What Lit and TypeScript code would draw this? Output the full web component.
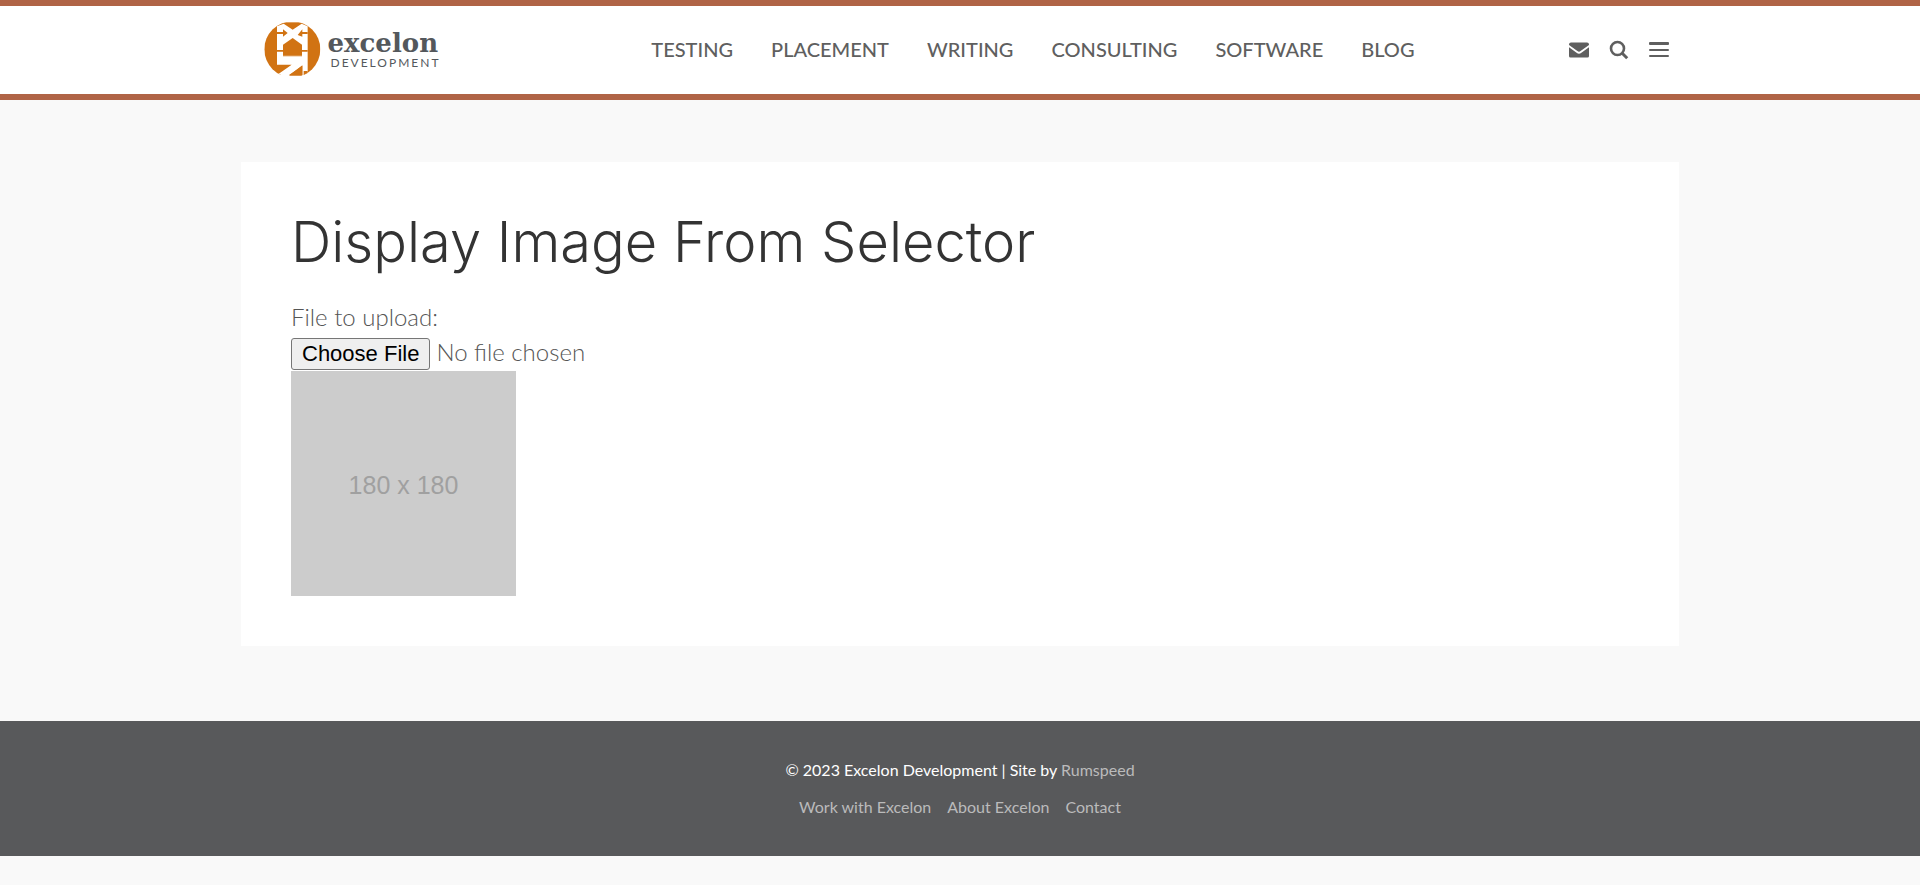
import { LitElement, html, css } from "lit";
import { customElement } from "lit/decorators.js";

const NAV = ["Testing", "Placement", "Writing", "Consulting", "Software", "Blog"];
const FOOTER_LINKS = ["Work with Excelon", "About Excelon", "Contact"];

@customElement("site-header")
class SiteHeader extends LitElement {
  static styles = css`
    :host {
      display: block;
      background: #fff;
      border-top: 6px solid #b06446;
      border-bottom: 6px solid #b06446;
      font-family: Lato, "Open Sans", sans-serif;
    }
    .bar {
      box-sizing: border-box;
      max-width: 1437px;
      height: 88px;
      margin: 0 auto;
      padding: 0 10px 2px 22px;
      display: grid;
      grid-template-columns: 1fr auto auto;
      column-gap: 154px;
      align-items: center;
    }
    .logo {
      display: flex;
      align-items: center;
      gap: 7px;
      color: #54585c;
      text-decoration: none;
    }
    .mark { width: 57px; height: 54px; }
    .words { display: flex; flex-direction: column; }
    .name {
      font: bold 26px/28px "DejaVu Serif", serif;
    }
    .sub {
      font-size: 12px;
      line-height: 12px;
      letter-spacing: 2px;
      padding-left: 3px;
    }
    nav { display: flex; gap: 38px; }
    nav a {
      color: #5f5f5f;
      font-size: 20px;
      font-weight: 500;
      line-height: 30px;
      text-decoration: none;
      text-transform: uppercase;
    }
    .tools {
      display: flex;
      justify-content: flex-end;
      align-items: center;
      gap: 20px;
      padding-top: 2px;
    }
    .tools button {
      display: block;
      width: 20px;
      height: 20px;
      padding: 0;
      border: 0;
      background: none;
      color: #5f5f5f;
      cursor: pointer;
    }
    .tools svg { display: block; width: 20px; height: 20px; }
  `;

  render() {
    return html`
      <div class="bar">
        <a class="logo" href="#" aria-label="Excelon Development">
          <svg class="mark" viewBox="101 65 171 162" aria-hidden="true">
            <clipPath id="disc"><path d="M102 147a84 84 0 1 0 168 0a84 84 0 1 0-168 0"/></clipPath>
            <g clip-path="url(#disc)">
              <rect x="100" y="66" width="172" height="158" fill="#d17313"/>
              <path fill="#fff" d="M140 78L160 70L187 88L214 70L232 78V224H216V196L176 224H140L184 193H140V78Z"/>
              <g fill="#d17313">
                <path d="M158 165V133L187 113L215 133V165Z"/>
                <path d="M140 95H158V87L172 98L158 109V101H140ZM232 101H216V109L202 104L216 87V95H232Z"/>
                <path d="M140 149H158V154H140ZM215 149H232V154H215Z"/>
                <path d="M216 195V226H176ZM220 212H232V226H220Z"/>
                <path d="M158 165H215V168H158Z"/>
              </g>
            </g>
          </svg>
          <span class="words">
            <span class="name">excelon</span>
            <span class="sub">DEVELOPMENT</span>
          </span>
        </a>
        <nav aria-label="Main">${NAV.map((n) => html`<a href="#">${n}</a>`)}</nav>
        <div class="tools">
          <button aria-label="Email">
            <svg viewBox="0 0 20 20" fill="currentColor">
              <path d="M2 2.500H18a2 2 0 0 1 2 2v.5L11.600 11.100a2.700 2.700 0 0 1-3.200 0L0 5V4.500a2 2 0 0 1 2-2zM0 7.200L7.600 12.800a4 4 0 0 0 4.800 0L20 7.200V16a1.500 1.500 0 0 1-1.500 1.500H1.500A1.500 1.500 0 0 1 0 16z"/>
            </svg>
          </button>
          <button aria-label="Search">
            <svg viewBox="0 0 20 20" fill="none" stroke="currentColor">
              <circle cx="8.500" cy="8.500" r="6.500" stroke-width="2.600"/>
              <path d="M13.200 13.200L18.200 18.200" stroke-width="3"/>
            </svg>
          </button>
          <button aria-label="Menu">
            <svg viewBox="0 0 20 20" fill="currentColor">
              <rect y="2" width="20" height="3" rx="1"/>
              <rect y="9" width="20" height="2" rx="1"/>
              <rect y="15" width="20" height="2" rx="1"/>
            </svg>
          </button>
        </div>
      </div>
    `;
  }
}

@customElement("site-footer")
class SiteFooter extends LitElement {
  static styles = css`
    :host {
      display: block;
      padding: 30px 24px 31px;
      background: #58595b;
      color: #fff;
      text-align: center;
      font: 16px/37px Lato, sans-serif;
    }
    p { margin: 0; }
    a { color: #bbb; text-decoration: none; }
    .links { display: flex; justify-content: center; gap: 16px; }
  `;

  render() {
    return html`
      <p>© 2023 Excelon Development | Site by <a href="#">Rumspeed</a></p>
      <div class="links">${FOOTER_LINKS.map((l) => html`<a href="#">${l}</a>`)}</div>
    `;
  }
}

@customElement("app-root")
class AppRoot extends LitElement {
  static styles = css`
    :host {
      display: block;
      min-height: 100vh;
      background: #f9f9f9;
      font-family: Lato, sans-serif;
    }
    main { padding: 62px 24px 75px; }
    .card {
      box-sizing: border-box;
      max-width: 1438px;
      margin: 0 auto;
      padding: 50px;
      background: #fff;
    }
    h1 {
      margin: 0 0 27px;
      color: #333;
      font: 300 56px/60px Inter, sans-serif;
    }
    .upload {
      display: flex;
      flex-direction: column;
      color: #555;
      font-size: 24px;
      font-weight: 300;
      line-height: 36px;
    }
    input {
      height: 36px;
      font: inherit;
      line-height: 34px;
      color: inherit;
    }
    input::file-selector-button {
      box-sizing: border-box;
      height: 32px;
      margin-right: 6px;
      padding: 0 10px;
      border: 1px solid #767676;
      border-radius: 3px;
      background: #efefef;
      color: #000;
      font: 22px/28px "Liberation Sans", Arial, sans-serif;
    }
    .preview {
      box-sizing: border-box;
      display: flex;
      align-items: center;
      justify-content: center;
      width: 225px;
      height: 225px;
      padding-top: 2px;
      background: #ccc;
      color: #a0a0a0;
      font: 25px/32px "Liberation Sans", Arial, sans-serif;
    }
  `;

  render() {
    return html`
      <site-header></site-header>
      <main>
        <div class="card">
          <h1>Display Image From Selector</h1>
          <div class="upload">
            <label for="file">File to upload:</label>
            <input id="file" type="file" accept="image/*" />
          </div>
          <div class="preview">180 x 180</div>
        </div>
      </main>
      <site-footer></site-footer>
    `;
  }
}
